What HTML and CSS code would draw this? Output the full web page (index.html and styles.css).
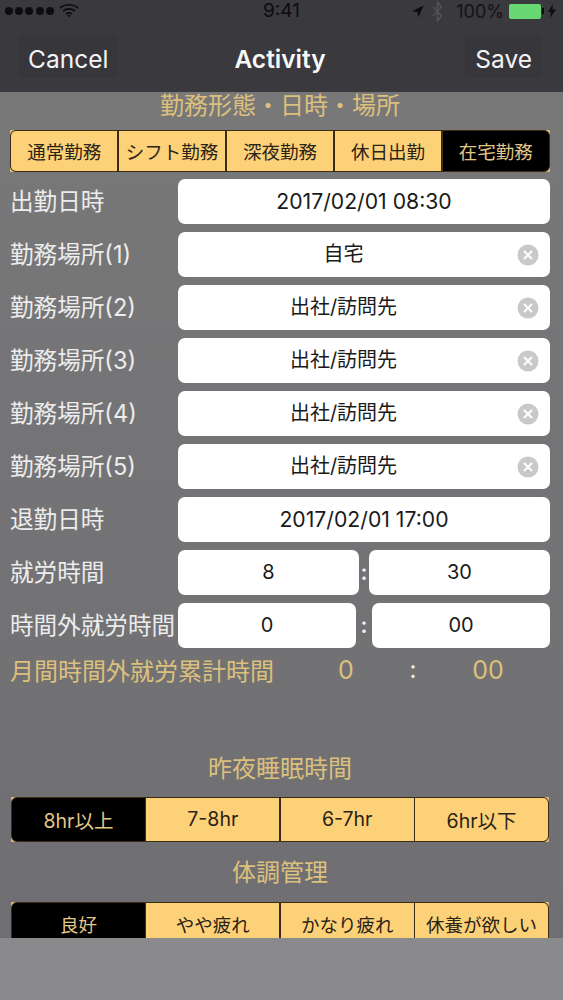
FILE: index.html
```html
<!DOCTYPE html>
<html lang="ja">
<head>
<meta charset="utf-8">
<title>Activity</title>
<link rel="stylesheet" href="styles.css">
</head>
<body>
<div class="page">
  <header class="top">
    <div class="status">
      <div class="st-left">
        <span class="dots"><i></i><i></i><i></i><i></i><i></i></span>
        <svg class="wifi" width="20" height="15" viewBox="0 0 20 15"><path d="M1 5.200C6 .6 14 .6 19 5.200M4 8.200c3.400-3 8.600-3 12 0M7 11c1.800-1.400 4.200-1.400 6 0" fill="none" stroke="#0d0d10" stroke-width="1.700"/><path d="M8.300 12.300 10 14.300l1.700-2c-1-.7-2.400-.7-3.400 0z" fill="#0d0d10"/></svg>
      </div>
      <div class="st-time">9:41</div>
      <div class="st-right">
        <svg width="13" height="13" viewBox="0 0 13 13"><path d="M12.500.5 1 6.300l5.500.6.800 5.600z" fill="#0d0d10"/></svg>
        <svg class="bt" width="11" height="21" viewBox="0 0 11 21"><path d="M1 6l8.500 9L5.500 20V1l4 5L1 15" fill="none" stroke="#55545a" stroke-width="1.300"/></svg>
        <span class="pct">100%</span>
        <span class="batt"></span>
        <span class="nub"></span>
        <svg width="8" height="14" viewBox="0 0 8 14"><path d="M5 0 0 8h3l-1 6 6-8.500H4.500z" fill="#0d0d10"/></svg>
      </div>
    </div>
    <nav class="nav">
      <div class="nav-btn"><span class="nav-text">Cancel</span></div>
      <div class="nav-title">Activity</div>
      <div class="nav-btn right"><span class="nav-text">Save</span></div>
    </nav>
  </header>

  <main class="content">
    <h2 class="title t1">勤務形態・日時・場所</h2>
    <div class="seg seg5"><div class="seg-in">
      <div class="cell">通常勤務</div>
      <div class="cell">シフト勤務</div>
      <div class="cell">深夜勤務</div>
      <div class="cell">休日出勤</div>
      <div class="cell on">在宅勤務</div>
    </div></div>

    <div class="rows">
      <div class="row"><div class="label">出勤日時</div><div class="field date">2017/02/01 08:30</div></div>
      <div class="row"><div class="label">勤務場所(1)</div><div class="field place">自宅<span class="clear"><svg width="22" height="22" viewBox="0 0 22 22"><circle cx="11" cy="11" r="10.500" fill="#c9c9cb"/><path d="M7 7l8 8M15 7l-8 8" stroke="#fff" stroke-width="2"/></svg></span></div></div>
      <div class="row"><div class="label">勤務場所(2)</div><div class="field place">出社/訪問先<span class="clear"><svg width="22" height="22" viewBox="0 0 22 22"><circle cx="11" cy="11" r="10.500" fill="#c9c9cb"/><path d="M7 7l8 8M15 7l-8 8" stroke="#fff" stroke-width="2"/></svg></span></div></div>
      <div class="row"><div class="label">勤務場所(3)</div><div class="field place">出社/訪問先<span class="clear"><svg width="22" height="22" viewBox="0 0 22 22"><circle cx="11" cy="11" r="10.500" fill="#c9c9cb"/><path d="M7 7l8 8M15 7l-8 8" stroke="#fff" stroke-width="2"/></svg></span></div></div>
      <div class="row"><div class="label">勤務場所(4)</div><div class="field place">出社/訪問先<span class="clear"><svg width="22" height="22" viewBox="0 0 22 22"><circle cx="11" cy="11" r="10.500" fill="#c9c9cb"/><path d="M7 7l8 8M15 7l-8 8" stroke="#fff" stroke-width="2"/></svg></span></div></div>
      <div class="row"><div class="label">勤務場所(5)</div><div class="field place">出社/訪問先<span class="clear"><svg width="22" height="22" viewBox="0 0 22 22"><circle cx="11" cy="11" r="10.500" fill="#c9c9cb"/><path d="M7 7l8 8M15 7l-8 8" stroke="#fff" stroke-width="2"/></svg></span></div></div>
      <div class="row"><div class="label">退勤日時</div><div class="field date">2017/02/01 17:00</div></div>
      <div class="row">
        <div class="label">就労時間</div>
        <div class="pair">
          <div class="field">8</div><span class="colon">:</span><div class="field">30</div>
        </div>
      </div>
      <div class="row">
        <div class="label">時間外就労時間</div>
        <div class="pair wide">
          <div class="field">0</div><span class="colon">:</span><div class="field">00</div>
        </div>
      </div>
    </div>

    <div class="month">
      <div class="m-label">月間時間外就労累計時間</div>
      <div class="m-h">0</div>
      <div class="m-c">:</div>
      <div class="m-m">00</div>
    </div>

    <h2 class="title t2">昨夜睡眠時間</h2>
    <div class="seg seg4 latin"><div class="seg-in">
      <div class="cell on">8hr以上</div>
      <div class="cell">7-8hr</div>
      <div class="cell">6-7hr</div>
      <div class="cell">6hr以下</div>
    </div></div>

    <h2 class="title t3">体調管理</h2>
    <div class="seg seg4"><div class="seg-in">
      <div class="cell on">良好</div>
      <div class="cell">やや疲れ</div>
      <div class="cell">かなり疲れ</div>
      <div class="cell">休養が欲しい</div>
    </div></div>
  </main>
  <div class="bottom"></div>
</div>
</body>
</html>
```

FILE: styles.css
```css
* { box-sizing: border-box; }
html, body { margin: 0; padding: 0; }
body {
  width: 563px;
  height: 1000px;
  overflow: hidden;
  font-family: Inter, "Noto Sans CJK JP", sans-serif;
}
.page { display: flex; flex-direction: column; height: 1000px; }

.top { height: 92px; background: #3a393e; flex: none; }
.status {
  height: 22px;
  display: flex;
  align-items: center;
  justify-content: space-between;
  padding: 0 7px 0 5px;
  position: relative;
  color: #0d0d10;
}
.st-left { display: flex; align-items: center; gap: 5px; }
.dots { display: flex; gap: 2.200px; }
.dots i { width: 8px; height: 8px; border-radius: 50%; background: #0d0d10; display: block; }
.wifi { margin-top: -1px; }
.st-time { font-size: 19px; position: absolute; left: 263px; top: 0; line-height: 22px; }
.st-right { display: flex; align-items: center; }
.bt { margin-left: 8px; }
.pct { font-size: 18px; margin-left: 13px; color: #131316; }
.batt {
  width: 32px; height: 15px; margin-left: 5px;
  background: #68d873; border-radius: 2px; display: block;
}
.nub { width: 2px; height: 6px; background: #0d0d10; margin: 0 4px 0 1px; }

.nav {
  height: 70px;
  display: grid;
  grid-template-columns: 1fr auto 1fr;
  align-items: center;
  padding: 0 21px 0 18px;
}
.nav-btn {
  justify-self: start;
  font-size: 24.500px;
  color: #f4f4f5;
  background: #37363b;
  border-radius: 5px;
  padding: 0 10px;
  height: 42px;
  line-height: 46px;
}
.nav-btn.right { justify-self: end; }
.nav-title { font-size: 24.500px; font-weight: 600; color: #f8f8f8; line-height: 46px; height: 42px; }

.content {
  height: 846px;
  flex: none;
  overflow: hidden;
  background: linear-gradient(#787879, #6f6e72);
  padding: 0 13px 0 10px;
}
.title {
  margin: 0;
  font-size: 24px;
  font-weight: 400;
  text-align: center;
  color: #dcc07c;
  line-height: 30px;
}
.t1 { margin-top: -1px; height: 39px; }
.t2 { margin-top: 66px; height: 43px; }
.t3 { margin-top: 16px; height: 30px; margin-bottom: 14px; }

.seg { background: #d8bd78; border-radius: 1px; }
.seg-in {
  display: grid;
  height: 100%;
  border: 1.500px solid #3b2d14;
  border-radius: 6px;
  overflow: hidden;
  background: #3b2d14;
  gap: 1.500px;
  color: #2a2317;
  font-size: 18.500px;
}
.seg5 { height: 42px; }
.seg5 .seg-in { grid-template-columns: repeat(5, 1fr); }
.seg4 { height: 45px; margin: 0 1px; }
.seg4 .seg-in { grid-template-columns: repeat(4, 1fr); }
.latin .seg-in { font-size: 19.500px; }
.cell {
  background: #fdd177;
  display: flex;
  align-items: center;
  justify-content: center;
  white-space: nowrap;
}
.cell.on { background: #000; color: #e3c68a; }

.rows { display: flex; flex-direction: column; gap: 8.500px; margin-top: 7px; }
.row { display: flex; align-items: stretch; height: 44.500px; }
.label {
  width: 168px;
  flex: none;
  font-size: 23.600px;
  color: #ececec;
  line-height: 45px;
  white-space: nowrap;
}
.field {
  flex: 1;
  position: relative;
  background: #fff;
  border-radius: 7px;
  font-size: 20px;
  color: #1a1a1a;
  text-align: center;
  line-height: 44px;
}
.field.date { font-size: 21.200px; }
.field.place { padding-right: 41px; }
.clear { position: absolute; right: 11px; top: 12px; height: 22px; line-height: 0; }
.pair { flex: 1; display: flex; align-items: stretch; }
.pair .field { flex: none; width: 181px; }
.colon { flex: 1; text-align: center; color: #f0f0f0; font-size: 22px; font-weight: 600; line-height: 44px; }
.pair.wide .field { width: 178px; }

.month {
  display: flex;
  align-items: center;
  height: 36px;
  margin-top: 4px;
  color: #dcc07c;
  font-size: 24px;
}
.m-label { width: 316px; flex: none; white-space: nowrap; }
.m-h { width: 40px; flex: none; text-align: center; font-size: 25px; }
.m-c { width: 94px; flex: none; text-align: center; color: #ececec; }
.m-m { width: 40px; flex: none; margin-left: 8px; text-align: center; font-size: 25px; }

.bottom { height: 62px; flex: none; background: #8a8a8c; }
```
